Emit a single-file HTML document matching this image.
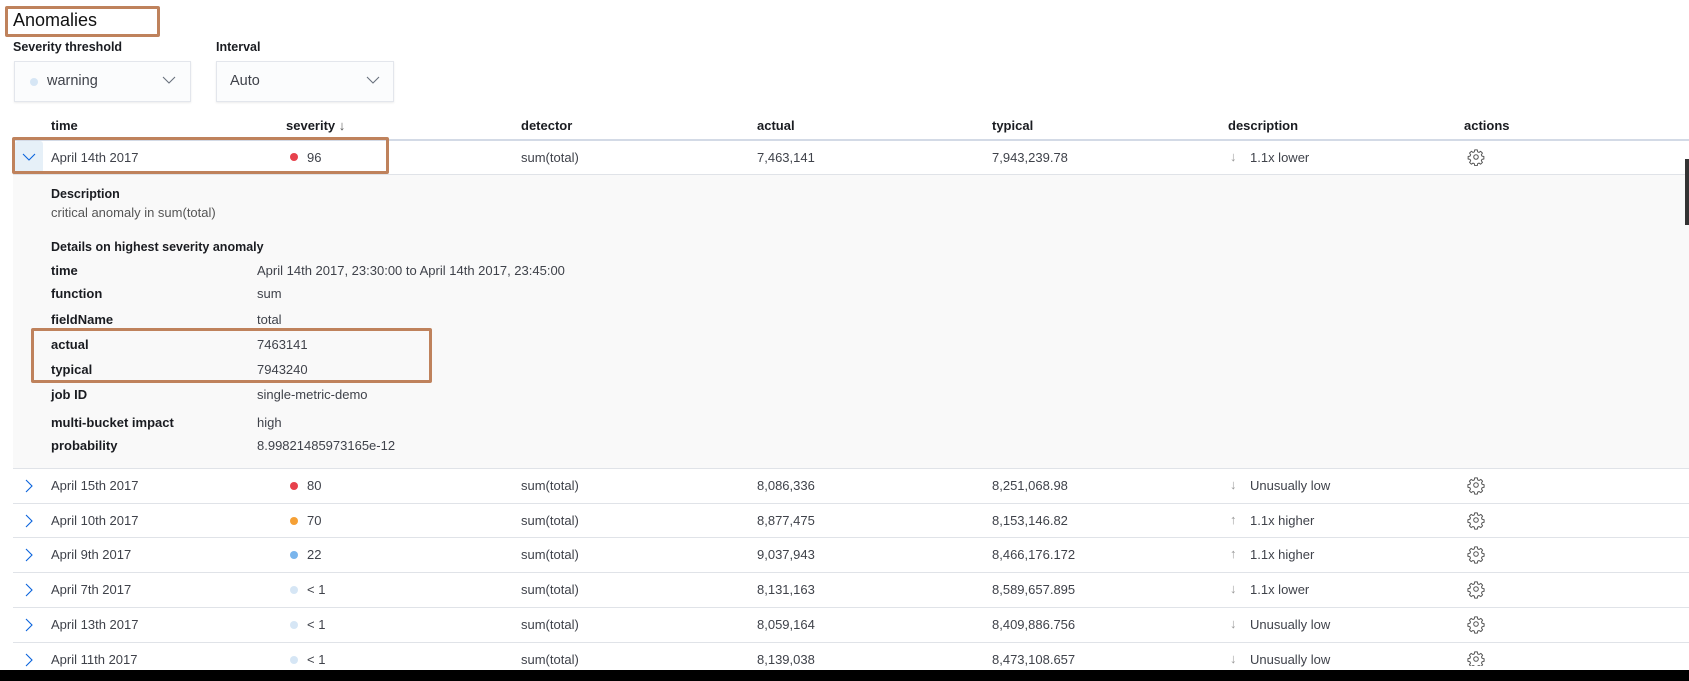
<!DOCTYPE html>
<html><head><meta charset="utf-8"><style>
*{margin:0;padding:0;box-sizing:border-box}
body{width:1689px;height:681px;background:#fff;font-family:"Liberation Sans",sans-serif;color:#3f424a;position:relative;overflow:hidden;font-size:13px}
.a{position:absolute;white-space:nowrap}
.b{font-weight:bold;color:#1a1c21}
.sel{position:absolute;top:61px;height:41px;background:#fbfcfd;border:1px solid #e3e6ec;box-shadow:0 1px 2px rgba(0,0,0,.08)}
.ob{position:absolute;border:3px solid #bf825c;border-radius:2px}
.line{position:absolute;left:13px;right:0;height:1px;background:#e0e3e8}
.dot{position:absolute;width:8px;height:8px;border-radius:50%}
.row{position:absolute;left:0;width:1689px;height:35px}
.row>div{position:absolute;top:10px;white-space:nowrap}
.ar{color:#999;font-size:13px;top:9px!important}
svg{position:absolute}
</style></head><body>
<div class="ob" style="left:5px;top:6px;width:155px;height:31px"></div>
<div class="a" style="left:13px;top:10px;font-size:18px;color:#111">Anomalies</div>
<div class="a b" style="left:13px;top:40px;font-size:12.5px">Severity threshold</div>
<div class="a b" style="left:216px;top:40px;font-size:12.5px">Interval</div>
<div class="sel" style="left:14px;width:177px"></div>
<div class="dot" style="left:30px;top:78px;background:#d6e6f5"></div>
<div class="a" style="left:47px;top:73px;font-size:14.5px">warning</div>
<svg style="left:162px;top:76px" width="14" height="9" viewBox="0 0 14 9"><path d="M1 1l6 6 6-6" fill="none" stroke="#69707d" stroke-width="1.1"/></svg>
<div class="sel" style="left:216px;width:178px"></div>
<div class="a" style="left:230px;top:73px;font-size:14.5px">Auto</div>
<svg style="left:366px;top:76px" width="14" height="9" viewBox="0 0 14 9"><path d="M1 1l6 6 6-6" fill="none" stroke="#69707d" stroke-width="1.1"/></svg>

<div class="a b" style="left:51px;top:118px">time</div>
<div class="a b" style="left:286px;top:118px">severity <span style="font-weight:normal;color:#555">&#8595;</span></div>
<div class="a b" style="left:521px;top:118px">detector</div>
<div class="a b" style="left:757px;top:118px">actual</div>
<div class="a b" style="left:992px;top:118px">typical</div>
<div class="a b" style="left:1228px;top:118px">description</div>
<div class="a b" style="left:1464px;top:118px">actions</div>
<div class="line" style="top:139px;height:2px;background:#d3dae6"></div>

<div class="a" style="left:15px;top:141px;width:28px;height:32px;background:#e6f0f8;border-radius:3px"></div>
<svg style="left:22px;top:153px" width="14" height="9" viewBox="0 0 14 9"><path d="M1 1l6 6 6-6" fill="none" stroke="#0b64dd" stroke-width="1.1"/></svg>
<div class="a" style="left:51px;top:150px">April 14th 2017</div>
<div class="dot" style="left:290px;top:153px;background:#e7414c"></div>
<div class="a" style="left:307px;top:150px">96</div>
<div class="a" style="left:521px;top:150px">sum(total)</div>
<div class="a" style="left:757px;top:150px">7,463,141</div>
<div class="a" style="left:992px;top:150px">7,943,239.78</div>
<div class="a" style="left:1230px;top:149px;color:#999;font-size:13px">&#8595;</div>
<div class="a" style="left:1250px;top:150px">1.1x lower</div>
<svg style="left:1467px;top:148px" width="18" height="18" viewBox="0 0 24 24"><circle cx="12" cy="12" r="3" fill="none" stroke="#555" stroke-width="1.4"/><path d="M10.3 2.5h3.4l.5 2.6 1.8.8 2.2-1.5 2.4 2.4-1.5 2.2.8 1.8 2.6.5v3.4l-2.6.5-.8 1.8 1.5 2.2-2.4 2.4-2.2-1.5-1.8.8-.5 2.6h-3.4l-.5-2.6-1.8-.8-2.2 1.5-2.4-2.4 1.5-2.2-.8-1.8-2.6-.5v-3.4l2.6-.5.8-1.8-1.5-2.2 2.4-2.4 2.2 1.5 1.8-.8z" fill="none" stroke="#555" stroke-width="1.3" stroke-linejoin="round"/></svg>
<div class="ob" style="left:12px;top:137px;width:377px;height:37px"></div>
<div class="line" style="top:174px"></div>

<div class="a" style="left:13px;top:175px;width:1676px;height:293px;background:#f9f9f9"></div>
<div class="a b" style="left:51px;top:187px;font-size:12.5px">Description</div>
<div class="a" style="left:51px;top:205px;color:#555">critical anomaly in sum(total)</div>
<div class="a b" style="left:51px;top:240px;font-size:12.5px">Details on highest severity anomaly</div>
<div class="a b" style="left:51px;top:263px">time</div><div class="a" style="left:257px;top:263px">April 14th 2017, 23:30:00 to April 14th 2017, 23:45:00</div>
<div class="a b" style="left:51px;top:286px">function</div><div class="a" style="left:257px;top:286px">sum</div>
<div class="a b" style="left:51px;top:312px">fieldName</div><div class="a" style="left:257px;top:312px">total</div>
<div class="a b" style="left:51px;top:337px">actual</div><div class="a" style="left:257px;top:337px">7463141</div>
<div class="a b" style="left:51px;top:362px">typical</div><div class="a" style="left:257px;top:362px">7943240</div>
<div class="a b" style="left:51px;top:387px">job ID</div><div class="a" style="left:257px;top:387px">single-metric-demo</div>
<div class="a b" style="left:51px;top:415px">multi-bucket impact</div><div class="a" style="left:257px;top:415px">high</div>
<div class="a b" style="left:51px;top:438px">probability</div><div class="a" style="left:257px;top:438px">8.99821485973165e-12</div>
<div class="ob" style="left:31px;top:328px;width:401px;height:55px"></div>
<div class="line" style="top:468px"></div>

<div class="row" style="top:468px"><svg style="left:25px;top:11px" width="9" height="14" viewBox="0 0 9 14"><path d="M1 1l6 6-6 6" fill="none" stroke="#0b64dd" stroke-width="1.1"/></svg><div style="left:51px">April 15th 2017</div><div class="dot" style="left:290px;top:14px;background:#e7414c"></div><div style="left:307px">80</div><div style="left:521px">sum(total)</div><div style="left:757px">8,086,336</div><div style="left:992px">8,251,068.98</div><div class="ar" style="left:1230px">&#8595;</div><div style="left:1250px">Unusually low</div></div>
<div class="line" style="top:503px"></div>
<div class="row" style="top:503px"><svg style="left:25px;top:11px" width="9" height="14" viewBox="0 0 9 14"><path d="M1 1l6 6-6 6" fill="none" stroke="#0b64dd" stroke-width="1.1"/></svg><div style="left:51px">April 10th 2017</div><div class="dot" style="left:290px;top:14px;background:#f5a035"></div><div style="left:307px">70</div><div style="left:521px">sum(total)</div><div style="left:757px">8,877,475</div><div style="left:992px">8,153,146.82</div><div class="ar" style="left:1230px">&#8593;</div><div style="left:1250px">1.1x higher</div></div>
<div class="line" style="top:537px"></div>
<div class="row" style="top:537px"><svg style="left:25px;top:11px" width="9" height="14" viewBox="0 0 9 14"><path d="M1 1l6 6-6 6" fill="none" stroke="#0b64dd" stroke-width="1.1"/></svg><div style="left:51px">April 9th 2017</div><div class="dot" style="left:290px;top:14px;background:#7ab5ec"></div><div style="left:307px">22</div><div style="left:521px">sum(total)</div><div style="left:757px">9,037,943</div><div style="left:992px">8,466,176.172</div><div class="ar" style="left:1230px">&#8593;</div><div style="left:1250px">1.1x higher</div></div>
<div class="line" style="top:572px"></div>
<div class="row" style="top:572px"><svg style="left:25px;top:11px" width="9" height="14" viewBox="0 0 9 14"><path d="M1 1l6 6-6 6" fill="none" stroke="#0b64dd" stroke-width="1.1"/></svg><div style="left:51px">April 7th 2017</div><div class="dot" style="left:290px;top:14px;background:#d6e6f5"></div><div style="left:307px">&lt; 1</div><div style="left:521px">sum(total)</div><div style="left:757px">8,131,163</div><div style="left:992px">8,589,657.895</div><div class="ar" style="left:1230px">&#8595;</div><div style="left:1250px">1.1x lower</div></div>
<div class="line" style="top:607px"></div>
<div class="row" style="top:607px"><svg style="left:25px;top:11px" width="9" height="14" viewBox="0 0 9 14"><path d="M1 1l6 6-6 6" fill="none" stroke="#0b64dd" stroke-width="1.1"/></svg><div style="left:51px">April 13th 2017</div><div class="dot" style="left:290px;top:14px;background:#d6e6f5"></div><div style="left:307px">&lt; 1</div><div style="left:521px">sum(total)</div><div style="left:757px">8,059,164</div><div style="left:992px">8,409,886.756</div><div class="ar" style="left:1230px">&#8595;</div><div style="left:1250px">Unusually low</div></div>
<div class="line" style="top:642px"></div>
<div class="row" style="top:642px"><svg style="left:25px;top:11px" width="9" height="14" viewBox="0 0 9 14"><path d="M1 1l6 6-6 6" fill="none" stroke="#0b64dd" stroke-width="1.1"/></svg><div style="left:51px">April 11th 2017</div><div class="dot" style="left:290px;top:14px;background:#d6e6f5"></div><div style="left:307px">&lt; 1</div><div style="left:521px">sum(total)</div><div style="left:757px">8,139,038</div><div style="left:992px">8,473,108.657</div><div class="ar" style="left:1230px">&#8595;</div><div style="left:1250px">Unusually low</div></div>

<svg style="left:1467px;top:476px" width="18" height="190" viewBox="0 0 18 190">
<g fill="none" stroke="#555" stroke-width="1"><g id="g"><circle cx="9" cy="9" r="2.3"/><path d="M7.7 1.9h2.6l.4 2 1.4.6 1.7-1.1 1.8 1.8-1.1 1.7.6 1.4 2 .4v2.6l-2 .4-.6 1.4 1.1 1.7-1.8 1.8-1.7-1.1-1.4.6-.4 2h-2.6l-.4-2-1.4-.6-1.7 1.1-1.8-1.8 1.1-1.7-.6-1.4-2-.4v-2.6l2-.4.6-1.4-1.1-1.7 1.8-1.8 1.7 1.1 1.4-.6z" stroke-linejoin="round"/></g>
<use href="#g" y="35"/><use href="#g" y="69"/><use href="#g" y="104"/><use href="#g" y="139"/><use href="#g" y="174"/></g></svg>

<div class="a" style="left:1685px;top:159px;width:4px;height:66px;background:#333"></div>
<div class="a" style="left:0;top:670px;width:1689px;height:11px;background:#000"></div>
</body></html>
